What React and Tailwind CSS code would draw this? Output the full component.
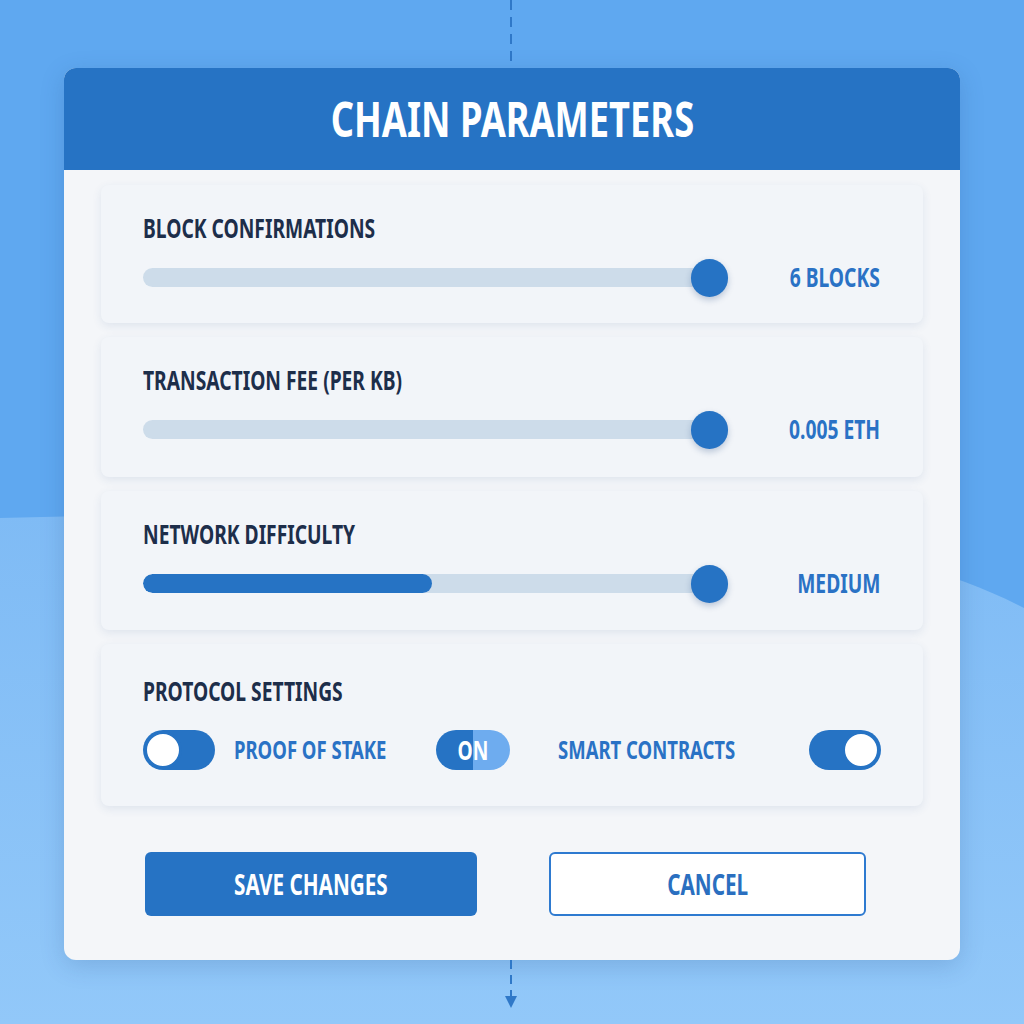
import { useState } from "react"

const font = { fontFamily: '"Noto Sans","Open Sans",sans-serif' }

// condensed look: the installed faces have no narrow width, so squeeze horizontally
function Narrow({ children, className = "origin-left" }) {
  return <span className={`inline-block whitespace-nowrap scale-x-[0.74] ${className}`}>{children}</span>
}

function Slider({ label, value, fill }) {
  return (
    <div className="h-full rounded-lg bg-[#f2f5f9] shadow-[0_3px_10px_rgba(40,80,140,0.10)] pl-[42px] pr-[43px] pt-[27px]">
      <div className="text-[26px] leading-[32px] font-bold text-[#1d2e4a]">
        <Narrow>{label}</Narrow>
      </div>
      <div className="flex items-center mt-[14px]">
        <div className="relative w-[585px] h-[38px] flex items-center">
          <div className="w-[572px] h-[19px] rounded-full bg-[#cddcea] overflow-hidden">
            {fill ? <div className="h-full rounded-full bg-[#2673c4]" style={{ width: fill }} /> : null}
          </div>
          <div className="absolute right-0 top-0 w-[37px] h-[38px] rounded-full bg-[#2673c4] shadow-[0_3px_6px_rgba(20,60,120,0.25)]" />
        </div>
        <div className="flex-1 text-right text-[26px] font-bold text-[#2a72c5]">
          <Narrow className="origin-right">{value}</Narrow>
        </div>
      </div>
    </div>
  )
}

function Toggle({ knob }) {
  // outlined white knob sitting on a blue pill
  return (
    <div className={`w-[72px] h-[40px] rounded-full bg-[#2673c4] flex items-center px-[1px] ${knob === "right" ? "justify-end" : "justify-start"}`}>
      <div className="w-[38px] h-[38px] rounded-full bg-white border-[3px] border-[#2673c4]" />
    </div>
  )
}

export default function App() {
  const [sliders] = useState([
    { label: "BLOCK CONFIRMATIONS", value: "6 BLOCKS", h: "h-[138px]" },
    { label: "TRANSACTION FEE (PER KB)", value: "0.005 ETH", h: "h-[140px]" },
    { label: "NETWORK DIFFICULTY", value: "MEDIUM", h: "h-[139px]", fill: "289px" },
  ])

  return (
    <div className="relative min-h-[1024px] overflow-hidden bg-[#5fa8f0]" style={font}>
      {/* lighter wave in the lower half, dashed connector on top */}
      <svg className="absolute inset-0" width="1024" height="1024" viewBox="0 0 1024 1024">
        <defs>
          <linearGradient id="wave" x1="0" y1="0" x2="0" y2="1">
            <stop offset="0" stopColor="#7fbbf5" />
            <stop offset="1" stopColor="#92c8f9" />
          </linearGradient>
        </defs>
        <path d="M0 518 C 400 508, 820 500, 1024 608 L1024 1024 L0 1024 Z" fill="url(#wave)" />
        <line x1="511" y1="0" x2="511" y2="68" stroke="#2f78c8" strokeWidth="2" strokeDasharray="10 7" />
      </svg>

      <div className="relative pt-[68px]">
        <div className="mx-auto w-[896px] rounded-xl overflow-hidden bg-[#f4f6f9] shadow-[0_6px_24px_rgba(20,60,120,0.18)]">
          <div className="h-[102px] bg-[#2673c4] flex items-center justify-center">
            <h1 className="text-[49px] font-bold text-white">
              <Narrow className="origin-center">CHAIN PARAMETERS</Narrow>
            </h1>
          </div>

          <div className="px-[37px] pt-[15px] pb-[44px]">
            <div className="flex flex-col gap-[14px]">
              {sliders.map((s) => (
                <div key={s.label} className={s.h}>
                  <Slider label={s.label} value={s.value} fill={s.fill} />
                </div>
              ))}

              <div className="h-[162px] rounded-lg bg-[#f2f5f9] shadow-[0_3px_10px_rgba(40,80,140,0.10)] pl-[42px] pr-[42px] pt-[31px]">
                <div className="text-[26px] leading-[32px] font-bold text-[#1d2e4a]">
                  <Narrow>PROTOCOL SETTINGS</Narrow>
                </div>
                <div className="flex items-center mt-[23px]">
                  <Toggle knob="left" />
                  <span className="ml-[19px] w-[154px] text-[25px] font-bold text-[#2a72c5]">
                    <Narrow>PROOF OF STAKE</Narrow>
                  </span>
                  <div className="ml-[48px] relative w-[74px] h-[40px] rounded-full overflow-hidden flex">
                    <div className="w-1/2 bg-[#2673c4]" />
                    <div className="w-1/2 bg-[#6eacef]" />
                    <span className="absolute inset-0 flex items-center justify-center text-[26px] font-bold text-white">
                      <Narrow className="origin-center">ON</Narrow>
                    </span>
                  </div>
                  <span className="ml-[48px] w-[182px] text-[25px] font-bold text-[#2a72c5]">
                    <Narrow>SMART CONTRACTS</Narrow>
                  </span>
                  <div className="ml-auto">
                    <Toggle knob="right" />
                  </div>
                </div>
              </div>
            </div>

            <div className="flex mt-[46px] pl-[44px]">
              <button className="w-[332px] h-[64px] rounded-md bg-[#2673c4] text-white text-[28px] font-bold">
                <Narrow className="origin-center">SAVE CHANGES</Narrow>
              </button>
              <button className="ml-[72px] w-[317px] h-[64px] rounded-md border-2 border-[#2e7ad0] bg-white text-[#2a6fc0] text-[28px] font-bold">
                <Narrow className="origin-center">CANCEL</Narrow>
              </button>
            </div>
          </div>
        </div>

        {/* dashed connector below with arrow */}
        <div className="flex flex-col items-center w-[24px] ml-[499px]">
          <svg width="14" height="48" viewBox="0 0 14 48">
            <line x1="7" y1="0" x2="7" y2="38" stroke="#2f78c8" strokeWidth="2" strokeDasharray="9 6" />
            <path d="M1 36 L13 36 L7 48 Z" fill="#2f78c8" />
          </svg>
        </div>
      </div>
    </div>
  )
}
